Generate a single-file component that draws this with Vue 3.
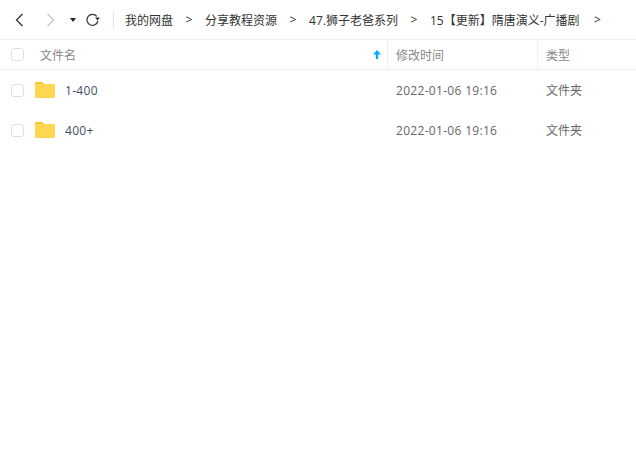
<template>
  <div class="page">
    <div class="toolbar">
      <div class="nav">
        <svg class="back" width="12" height="16" viewBox="0 0 12 16" fill="none">
          <path d="M9.500 2L3.500 8l6 6" stroke="#333" stroke-width="1.300" />
        </svg>
        <svg class="forward" width="12" height="16" viewBox="0 0 12 16" fill="none">
          <path d="M2.500 2l6 6-6 6" stroke="#c4c4c4" stroke-width="1.300" />
        </svg>
        <svg class="caret" width="6" height="4" viewBox="0 0 6 4">
          <path d="M0 0h6L3 4z" fill="#222" />
        </svg>
        <svg class="reload" width="14" height="13" viewBox="0 0 14 13" fill="none">
          <path d="M11.900 8A5.500 5.500 0 1 1 10.800 3.300" stroke="#333" stroke-width="1.200" />
          <path d="M9 4.400h5L11.500 7.400z" fill="#333" />
        </svg>
      </div>
      <div class="crumbs">
        <template v-for="c in crumbs" :key="c">
          <span class="crumb">{{ c }}</span>
          <span class="sep">&gt;</span>
        </template>
      </div>
    </div>

    <div class="row head">
      <span class="check"></span>
      <div class="col-name">
        <span>文件名</span>
        <svg class="sort" width="8" height="9" viewBox="0 0 8 9">
          <path d="M4 0L8 4.500H5.200V9H2.800V4.500H0z" fill="#09aaff" />
        </svg>
      </div>
      <div class="col-time">修改时间</div>
      <div class="col-type">类型</div>
    </div>

    <div v-for="f in files" :key="f.name" class="row item">
      <span class="check"></span>
      <div class="col-name">
        <svg class="folder" width="20" height="16" viewBox="0 0 20 16">
          <path d="M1.500 0H7l2.200 2H18.500A1.500 1.500 0 0 1 20 3.500V14.500A1.500 1.500 0 0 1 18.500 16H1.500A1.500 1.500 0 0 1 0 14.500V1.500A1.500 1.500 0 0 1 1.500 0z" fill="#ffd64f" />
          <path d="M1.500 0H7l2.200 2H0V1.500A1.500 1.500 0 0 1 1.500 0z" fill="#fcc428" />
        </svg>
        <span class="name">{{ f.name }}</span>
      </div>
      <div class="col-time">{{ f.time }}</div>
      <div class="col-type">{{ f.type }}</div>
    </div>
  </div>
</template>

<script setup>
const crumbs = ['我的网盘', '分享教程资源', '47.狮子老爸系列', '15【更新】隋唐演义-广播剧']

const files = [
  { name: '1-400', time: '2022-01-06 19:16', type: '文件夹' },
  { name: '400+', time: '2022-01-06 19:16', type: '文件夹' }
]
</script>

<style scoped>
.page {
  width: 636px;
  height: 460px;
  background: #fff;
  overflow: hidden;
  font-family: "Open Sans", "Noto Sans CJK SC", sans-serif;
  font-size: 12px;
  color: #666;
}
.toolbar {
  display: flex;
  align-items: center;
  height: 39px;
  border-bottom: 1px solid #f0f0f0;
}
.nav {
  display: flex;
  align-items: center;
  width: 113px;
  height: 16px;
  border-right: 1px solid #e0e0e0;
  flex: none;
}
.back {
  margin-left: 13px;
}
.forward {
  margin-left: 20px;
}
.caret {
  margin-left: 13px;
}
.reload {
  margin-left: 10px;
}
.crumbs {
  display: flex;
  align-items: center;
  margin-left: 11px;
  color: #333;
}
.sep {
  width: 7px;
  margin: 0 12.500px;
}
.crumb {
  white-space: nowrap;
}
.crumb:nth-last-of-type(2) {
  padding-right: 2px;
}
.row {
  display: flex;
  align-items: center;
}
.head {
  height: 29px;
  border-bottom: 1px solid #f0f0f0;
  color: #888;
}
.item {
  height: 40px;
}
.check {
  width: 11px;
  height: 11px;
  margin-left: 11px;
  border: 1px solid #e0e0e0;
  border-radius: 3px;
  flex: none;
}
.col-name {
  display: flex;
  align-items: center;
  width: 352px;
  height: 100%;
  margin-left: 11px;
  box-sizing: border-box;
}
.head .col-name {
  justify-content: space-between;
  padding: 0 6px 0 5px;
}
.folder {
  flex: none;
}
.name {
  margin-left: 10px;
  color: #424e67;
  letter-spacing: 0.3px;
}
.col-time,
.col-type {
  display: flex;
  align-items: center;
  height: 100%;
  padding-left: 9px;
  box-sizing: border-box;
}
.col-time {
  width: 150px;
  letter-spacing: 0.31px;
}
.head .col-time,
.head .col-type {
  padding-left: 8px;
  border-left: 1px solid #f0f0f0;
  letter-spacing: 0;
}
</style>
